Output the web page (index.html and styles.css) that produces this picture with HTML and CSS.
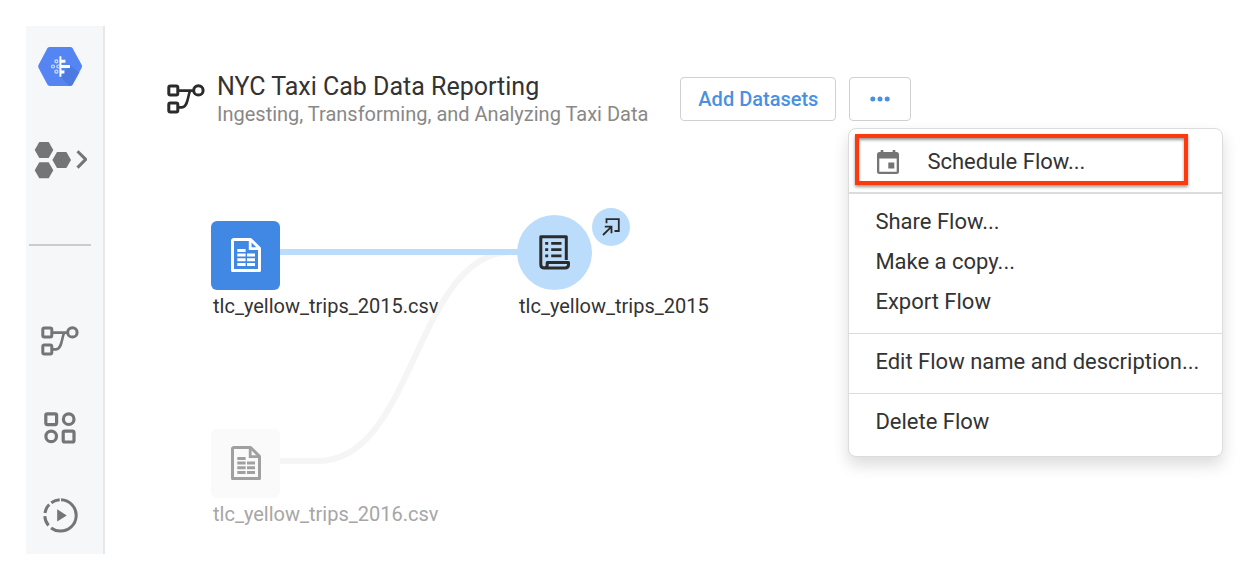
FILE: index.html
```html
<!DOCTYPE html>
<html lang="en">
<head>
<meta charset="utf-8">
<title>NYC Taxi Cab Data Reporting</title>
<link rel="stylesheet" href="styles.css">
</head>
<body>
<svg class="symbols" aria-hidden="true">
  <symbol id="flow" viewBox="0 0 38 30">
    <g fill="none" stroke="currentColor" stroke-width="3">
      <rect x="1.8" y="1.9" width="9" height="9" rx="1.5"/>
      <rect x="1.8" y="18.9" width="9" height="9" rx="1.5"/>
      <circle cx="31.4" cy="6.4" r="4.7"/>
      <path d="M11 6.6H26.5M23.2 6.6C20.4 13 21 22.8 15 23.4H11" stroke-width="2.6"/>
    </g>
  </symbol>
  <symbol id="file" viewBox="0 0 30 35">
    <path d="M2.4 1.5H19.6L28.5 10.4V32.6H1.5V2.4Z" fill="none" stroke="currentColor" stroke-width="3" stroke-linejoin="round"/>
    <path d="M19.2 2V10.6H28" fill="none" stroke="currentColor" stroke-width="2.8"/>
    <path d="M6.3 11h8.3v3H6.3zM6.3 15.6h8.3v3H6.3zM6.3 20.3h8.3v3H6.3zM6.3 25h8.3v3H6.3zM16 15.6h8v3h-8zM16 20.3h8v3h-8zM16 25h8v3h-8z" fill="currentColor"/>
  </symbol>
</svg>

<nav class="sidebar" aria-label="Main">
  <a class="nav-link" href="#home" aria-label="Home">
    <svg width="44" height="39" viewBox="0 0 44 39">
      <path d="M11.8 0H32.4Q33.8 0 34.6 1.3L43.6 17.8Q44.4 19.4 43.6 21L34.6 37.6Q33.8 39 32.4 39H11.8Q10.2 39 9.4 37.6L.6 21Q-.2 19.4 .6 17.8L9.4 1.3Q10.2 0 11.8 0Z" fill="#5485f2"/>
      <path d="M32 18.2L41.3 25.4L34.6 37.6Q33.8 39 32.4 39H31L22.4 29.5Z" fill="#4c7ae0"/>
      <path d="M21.4 9.3h2v3.4h4v3h-4V18H32v3.1h-8.6v2.3h3v3h-3v3.4h-2Z" fill="#fff"/>
      <g fill="none" stroke="#d4e0fc" stroke-width="1.2">
        <circle cx="18.4" cy="14.3" r="1.5"/><circle cx="15" cy="19.5" r="1.5"/><circle cx="20.3" cy="19.5" r="1.5"/><circle cx="18.4" cy="24.7" r="1.5"/>
      </g>
    </svg>
  </a>
  <a class="nav-link nav-project" href="#projects" aria-label="Projects">
    <svg width="53" height="38" viewBox="0 0 53 38">
      <g fill="#757575">
        <path d="M5.3 0h9.4l4.6 8-4.6 8H5.3L.7 8z"/>
        <path d="M23 10h9.4l4.6 8-4.6 8H23l-4.6-8z"/>
        <path d="M5.3 20.2h9.4l4.6 8-4.6 8H5.3l-4.6-8z"/>
      </g>
      <path d="M43.5 9.2L51.7 17.4L43.5 25.6" fill="none" stroke="#757575" stroke-width="3"/>
    </svg>
  </a>
  <hr class="nav-rule">
  <a class="nav-link nav-flows" href="#flows" aria-label="Flows"><svg width="38" height="30"><use href="#flow"/></svg></a>
  <a class="nav-link nav-library" href="#library" aria-label="Library">
    <svg width="32" height="32" viewBox="0 0 32 32" fill="none" stroke="#757575" stroke-width="3.2">
      <rect x="1.8" y="1.8" width="10.8" height="10.8" rx="1.5"/><circle cx="24.7" cy="7.2" r="5.3"/>
      <circle cx="7.2" cy="24.4" r="5.3"/><rect x="19.2" y="19.2" width="10.8" height="10.8" rx="1.5"/>
    </svg>
  </a>
  <a class="nav-link nav-jobs" href="#jobs" aria-label="Jobs">
    <svg width="35" height="35" viewBox="0 0 35 35">
      <circle cx="17.5" cy="17.4" r="15.7" fill="none" stroke="#757575" stroke-width="3" pathLength="360" stroke-dasharray="215 13 37 12 35 10 33 5" transform="rotate(-88 17.5 17.4)"/>
      <path d="M14.2 11.2V23.5L23.8 17.4Z" fill="#757575"/>
    </svg>
  </a>
</nav>

<main class="main">
  <header class="flow-header">
    <svg class="flow-icon" width="38" height="30"><use href="#flow"/></svg>
    <div class="flow-title">
      <h1 class="title">NYC Taxi Cab Data Reporting</h1>
      <p class="subtitle">Ingesting, Transforming, and Analyzing Taxi Data</p>
    </div>
    <button class="button" type="button">Add Datasets</button>
    <div class="more">
      <button class="button more-button" type="button" aria-label="More actions" aria-haspopup="menu" aria-expanded="true">
        <svg width="20" height="6" viewBox="0 0 20 6" fill="#4a90e2"><circle cx="2.8" cy="3" r="2.5"/><circle cx="10" cy="3" r="2.5"/><circle cx="17.2" cy="3" r="2.5"/></svg>
      </button>
      <div class="menu" role="menu">
        <div class="menu-group menu-group-first">
          <button class="menu-item menu-item-marked" role="menuitem" type="button">
            <svg width="22" height="24" viewBox="0 0 22 24">
              <path d="M3.7 0h2.6v2h9.4V0h2.6v2h1.2Q22 2 22 4.5v17Q22 24 19.5 24h-17Q0 24 0 21.5v-17Q0 2 2.5 2h1.2ZM2.3 8.5V21.7h17.4V8.5ZM11.3 12.6h6v6h-6Z" fill="#757575" fill-rule="evenodd"/>
            </svg>
            Schedule Flow...
          </button>
        </div>
        <div class="menu-group">
          <button class="menu-item" role="menuitem" type="button">Share Flow...</button>
          <button class="menu-item" role="menuitem" type="button">Make a copy...</button>
          <button class="menu-item" role="menuitem" type="button">Export Flow</button>
        </div>
        <div class="menu-group">
          <button class="menu-item" role="menuitem" type="button">Edit Flow name and description...</button>
        </div>
        <div class="menu-group menu-group-last">
          <button class="menu-item" role="menuitem" type="button">Delete Flow</button>
        </div>
      </div>
    </div>
  </header>

  <section class="canvas" aria-label="Flow diagram">
    <svg class="links" width="520" height="400" viewBox="0 0 520 400" fill="none" stroke-width="6" aria-hidden="true">
      <path d="M175 335H213C310 335 310 126 407 126H420" stroke="#f5f5f5"/>
      <path d="M175 126H420" stroke="#bbdcfb"/>
    </svg>
    <div class="node node-source">
      <div class="tile"><svg width="30" height="35"><use href="#file"/></svg></div>
      <span class="node-label">tlc_yellow_trips_2015.csv</span>
    </div>
    <div class="node node-recipe">
      <div class="recipe">
        <svg width="31" height="35" viewBox="0 0 31 35" fill="none" stroke="#2b2b2b">
          <path d="M27.3 25V1.8H1.8V29.5Q1.8 33 5.3 33H26Q29.5 33 29.5 29.5V27.5H8.2V30.3Q8.2 32.8 5.5 32.8" stroke-width="3" stroke-linejoin="round"/>
          <path d="M12.2 8.4h10.3M12.2 14.7h10.3M12.2 20.9h10.3M6.2 8.4h3M6.2 14.7h3M6.2 20.9h3" stroke-width="2.8"/>
        </svg>
      </div>
      <span class="node-label">tlc_yellow_trips_2015</span>
    </div>
    <div class="node node-output">
      <svg width="18" height="18" viewBox="0 0 18 18" fill="none" stroke="#2b2b2b" stroke-width="1.8">
        <path d="M4.5 5.3V1.2H16.8V13H12.5M1 17L9.3 8.9M2.8 8.7H9.5V15.3"/>
      </svg>
    </div>
    <div class="node node-inactive">
      <div class="tile tile-inactive"><svg width="30" height="35"><use href="#file"/></svg></div>
      <span class="node-label">tlc_yellow_trips_2016.csv</span>
    </div>
  </section>
</main>
</body>
</html>
```
FILE: styles.css
```css
* {
  box-sizing: border-box;
}

body {
  margin: 0;
  min-height: 100vh;
  padding: 26px 18px 17px 26px;
  display: flex;
  background: #fff;
  color: #333;
  font: 20px/24px Roboto, "Liberation Sans", sans-serif;
}

svg {
  display: block;
  flex: none;
}

.symbols {
  position: absolute;
  width: 0;
  height: 0;
}

button {
  font: inherit;
  color: inherit;
  cursor: pointer;
}

.sidebar {
  flex: none;
  width: 79px;
  padding: 21px 9px 21px 0;
  display: flex;
  flex-direction: column;
  align-items: center;
  background: #f5f7f9;
  border-right: 2px solid #e6e8ea;
}

.nav-link {
  color: #757575;
}

.nav-project {
  margin-top: 56px;
}

.nav-rule {
  width: 62px;
  height: 2px;
  margin: 64px 0 0;
  border: 0;
  background: #cacccd;
}

.nav-flows {
  margin-top: 80px;
}

.nav-library {
  margin-top: 56px;
}

.nav-jobs {
  margin-top: 54px;
}

.main {
  flex: 1;
  display: flex;
  flex-direction: column;
}

.flow-header {
  display: flex;
  align-items: center;
  padding: 46px 0 0 62px;
}

.flow-icon {
  margin-right: 12px;
  color: #2b2b2b;
}

.flow-title {
  margin-right: 32px;
  white-space: nowrap;
}

.title {
  margin: 0;
  font-size: 25px;
  font-weight: 400;
  line-height: 30px;
}

.subtitle {
  margin: 0;
  color: #888;
}

.button {
  height: 44px;
  padding: 0 17px;
  border: 1px solid #d0d0d0;
  border-radius: 4px;
  background: #fff;
  color: #4a90e2;
  font-weight: 500;
}

.more {
  position: relative;
  display: flex;
  margin-left: 13px;
}

.more-button {
  padding: 0 20px;
}

.menu {
  position: absolute;
  top: 100%;
  left: 0;
  z-index: 1;
  width: max-content;
  margin: 7px 0 0 -1px;
  border: 1px solid #dcdcdc;
  border-radius: 8px;
  background: #fff;
  font-size: 22px;
  box-shadow: 0 8px 16px rgba(0, 0, 0, 0.14);
}

.menu-group {
  display: flex;
  flex-direction: column;
  padding: 8px 0 11px;
}

.menu-group + .menu-group {
  border-top: 1px solid #dcdcdc;
}

.menu-group-first {
  padding: 5px 34px 7px 6px;
  border-bottom: 1px solid #dcdcdc;
}

.menu-group-last {
  padding-bottom: 14px;
}

.menu-item {
  height: 40px;
  padding: 0 23px 0 26px;
  border: 0;
  background: none;
  text-align: left;
}

.menu-item-marked {
  display: flex;
  align-items: center;
  gap: 28px;
  height: 51px;
  padding: 4px 18px 0;
  border: 4px solid #fc3a0e;
  box-shadow: 0 2px 3px rgba(0, 0, 0, 0.4), inset 0 2px 3px rgba(0, 0, 0, 0.4);
}

.canvas {
  position: relative;
  flex: 1;
  min-height: 400px;
}

.links {
  position: absolute;
  top: 0;
  left: 0;
}

.node {
  position: absolute;
}

.node-source {
  left: 106px;
  top: 95px;
}

.node-recipe {
  left: 412px;
  top: 89px;
}

.node-output {
  left: 487px;
  top: 82px;
  width: 38px;
  height: 38px;
  display: grid;
  place-items: center;
  border-radius: 50%;
  background: #bbdcfb;
}

.node-inactive {
  left: 106px;
  top: 303px;
  color: #a6a6a6;
}

.tile {
  width: 69px;
  height: 69px;
  display: grid;
  place-items: center;
  border-radius: 6px;
  background: #4088e4;
  color: #fff;
}

.tile-inactive {
  background: #fafafa;
  color: #a0a0a0;
}

.recipe {
  width: 75px;
  height: 75px;
  display: grid;
  place-items: center;
  border-radius: 50%;
  background: #bbdcfb;
}

.node-label {
  display: block;
  margin: 4px 0 0 2px;
}
```
